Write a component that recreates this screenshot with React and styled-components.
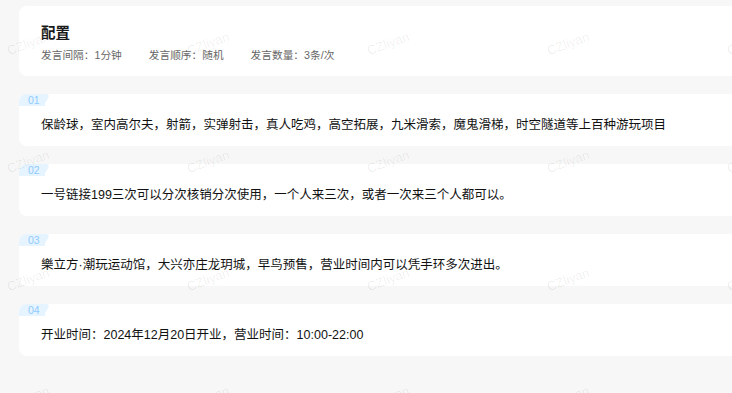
import React from 'react';
import styled, { createGlobalStyle } from 'styled-components';

const GlobalStyle = createGlobalStyle`
    html, body {
        margin: 0;
        padding: 0;
        background: #f7f7f7;
        overflow: hidden;
    }
    body {
        font-family: "Liberation Sans", "Noto Sans CJK SC", sans-serif;
        color: #222;
    }
`;

const Page = styled.div`
    position: relative;
    height: 393px;
    overflow: hidden;
    padding: 6px 0 0 19px;
    box-sizing: border-box;
    display: flex;
    flex-direction: column;
    gap: 18px;
`;

const Card = styled.div`
    background: #fff;
    border-radius: 8px 0 0 8px;
    margin-right: -10px;
    box-sizing: border-box;
    flex-shrink: 0;
`;

const ConfigCard = styled(Card)`
    height: 70px;
    padding: 17px 22px 0;
`;

const Title = styled.h1`
    margin: 0;
    font-size: 14.5px;
    line-height: 20px;
    font-weight: 700;
    color: #1a1a1a;
`;

const MetaRow = styled.div`
    margin-top: 4px;
    display: flex;
    gap: 27px;
    font-size: 10.7px;
    line-height: 16px;
    color: #666;
`;

const ItemCard = styled(Card)`
    height: 52px;
`;

const Tag = styled.span`
    position: relative;
    isolation: isolate;
    display: inline-block;
    height: 12px;
    width: 17px;
    padding-left: 9px;
    background: #e6f4ff;
    border-top-left-radius: 8px;
    font-size: 10.5px;
    line-height: 12px;
    color: #91caff;
    vertical-align: top;

    &::after {
        content: '';
        position: absolute;
        z-index: -1;
        top: 0;
        right: -2px;
        width: 10px;
        height: 12px;
        background: #e6f4ff;
        transform: skewX(-30deg);
        border-top-right-radius: 4px;
    }
`;

const ItemText = styled.p`
    margin: 3px 0 0;
    padding: 0 22px;
    font-size: 12.5px;
    line-height: 20px;
    color: #111;
    white-space: nowrap;
`;

const Watermarks = styled.div`
    position: absolute;
    left: -62px;
    top: -16px;
    display: grid;
    grid-template-columns: repeat(5, 180px);
    grid-auto-rows: 118px;
    pointer-events: none;
`;

const Mark = styled.span`
    display: flex;
    align-items: center;
    justify-content: center;
    font-family: "Liberation Sans", sans-serif;
    font-size: 13px;
    color: rgba(0, 0, 0, 0.07);
    transform: rotate(-20deg);
`;

const items = [
    '保龄球，室内高尔夫，射箭，实弹射击，真人吃鸡，高空拓展，九米滑索，魔鬼滑梯，时空隧道等上百种游玩项目',
    '一号链接199三次可以分次核销分次使用，一个人来三次，或者一次来三个人都可以。',
    '樂立方·潮玩运动馆，大兴亦庄龙玥城，早鸟预售，营业时间内可以凭手环多次进出。',
    '开业时间：2024年12月20日开业，营业时间：10:00-22:00',
];

const App = () => (
    <>
        <GlobalStyle />
        <Page>
            <ConfigCard>
                <Title>配置</Title>
                <MetaRow>
                    <span>发言间隔：1分钟</span>
                    <span>发言顺序：随机</span>
                    <span>发言数量：3条/次</span>
                </MetaRow>
            </ConfigCard>
            {items.map((text, idx) => (
                <ItemCard key={idx}>
                    <Tag>{String(idx + 1).padStart(2, '0')}</Tag>
                    <ItemText>{text}</ItemText>
                </ItemCard>
            ))}
            <Watermarks>
                {Array.from({ length: 20 }).map((_, i) => (
                    <Mark key={i}>CZliyan</Mark>
                ))}
            </Watermarks>
        </Page>
    </>
);

export default App;
